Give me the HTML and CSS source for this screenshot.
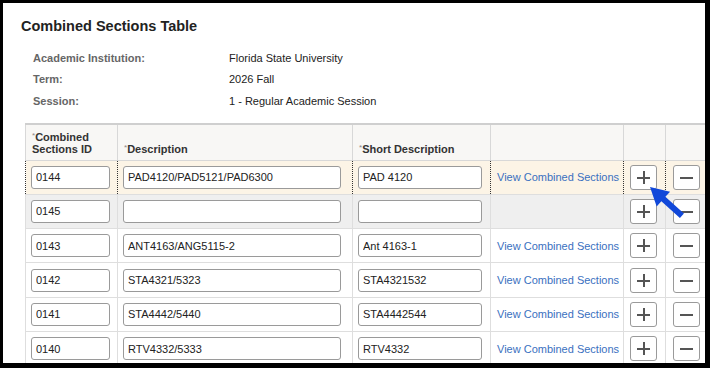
FILE: index.html
```html
<!DOCTYPE html>
<html>
<head>
<meta charset="utf-8">
<link rel="stylesheet" href="styles.css">
</head>
<body>
<div class="page">
  <h1 class="title">Combined Sections Table</h1>
  <div class="info">
    <div class="lbl">Academic Institution:</div><div class="val">Florida State University</div>
    <div class="lbl">Term:</div><div class="val">2026 Fall</div>
    <div class="lbl">Session:</div><div class="val">1 - Regular Academic Session</div>
  </div>
  <table class="grid">
    <colgroup>
      <col class="c-id"><col class="c-desc"><col class="c-short"><col class="c-link"><col class="c-btn"><col class="c-btn2">
    </colgroup>
    <thead>
      <tr>
        <th><span class="req">*</span>Combined<br>Sections ID</th>
        <th><span class="req">*</span>Description</th>
        <th><span class="req">*</span>Short Description</th>
        <th></th><th></th><th></th>
      </tr>
    </thead>
    <tbody>
      <tr class="sel">
        <td><input class="in-id" value="0144"></td>
        <td><input class="in-desc" value="PAD4120/PAD5121/PAD6300"></td>
        <td><input class="in-short" value="PAD 4120"></td>
        <td><a class="link">View Combined Sections</a></td>
        <td><span class="btn plus"></span></td>
        <td><span class="btn minus"></span></td>
      </tr>
      <tr class="new">
        <td><input class="in-id" value="0145"></td>
        <td><input class="in-desc" value=""></td>
        <td><input class="in-short" value=""></td>
        <td></td>
        <td><span class="btn plus"></span></td>
        <td><span class="btn minus"></span></td>
      </tr>
      <tr>
        <td><input class="in-id" value="0143"></td>
        <td><input class="in-desc" value="ANT4163/ANG5115-2"></td>
        <td><input class="in-short" value="Ant 4163-1"></td>
        <td><a class="link">View Combined Sections</a></td>
        <td><span class="btn plus"></span></td>
        <td><span class="btn minus"></span></td>
      </tr>
      <tr>
        <td><input class="in-id" value="0142"></td>
        <td><input class="in-desc" value="STA4321/5323"></td>
        <td><input class="in-short" value="STA4321532"></td>
        <td><a class="link">View Combined Sections</a></td>
        <td><span class="btn plus"></span></td>
        <td><span class="btn minus"></span></td>
      </tr>
      <tr>
        <td><input class="in-id" value="0141"></td>
        <td><input class="in-desc" value="STA4442/5440"></td>
        <td><input class="in-short" value="STA4442544"></td>
        <td><a class="link">View Combined Sections</a></td>
        <td><span class="btn plus"></span></td>
        <td><span class="btn minus"></span></td>
      </tr>
      <tr>
        <td><input class="in-id" value="0140"></td>
        <td><input class="in-desc" value="RTV4332/5333"></td>
        <td><input class="in-short" value="RTV4332"></td>
        <td><a class="link">View Combined Sections</a></td>
        <td><span class="btn plus"></span></td>
        <td><span class="btn minus"></span></td>
      </tr>
    </tbody>
  </table>
  <svg class="arrow" width="50" height="45" viewBox="0 0 50 45">
    <polygon points="7,7 27.06,11.64 22.37,16.83 40.9,33.6 36.9,38 18.35,21.29 13.66,26.48" fill="#1148d9"/>
  </svg>
</div>
</body>
</html>
```

FILE: styles.css
```css
html, body {
  margin: 0;
  padding: 0;
  background: #000;
}
body {
  width: 710px;
  height: 368px;
  overflow: hidden;
  font-family: "Liberation Sans", Arial, sans-serif;
}
.page {
  position: relative;
  margin: 3px 0 0 3px;
  width: 702px;
  height: 360px;
  background: #fff;
  overflow: hidden;
}
.title {
  margin: 0;
  padding: 14px 0 0 18px;
  font-size: 14.5px;
  line-height: 18px;
  font-weight: bold;
  color: #222;
}
.info {
  display: grid;
  grid-template-columns: 196px auto;
  grid-auto-rows: 21.5px;
  margin: 12px 0 0 30px;
  font-size: 11px;
  align-items: center;
}
.lbl {
  font-weight: bold;
  color: #666;
}
.val {
  color: #222;
}
.grid {
  margin: 11px 0 0 22px;
  border-collapse: collapse;
  table-layout: fixed;
  width: 722px;
  font-size: 11px;
}
.c-id { width: 92px; }
.c-desc { width: 235px; }
.c-short { width: 138px; }
.c-link { width: 133px; }
.c-btn { width: 42px; }
.c-btn2 { width: 82px; }
.grid th {
  background: #f8f7f5;
  border: 1px solid #d8d8d8;
  border-top: 2px solid #cfcfcf;
  text-align: left;
  vertical-align: bottom;
  font-weight: bold;
  color: #333;
  padding: 0 5px 5px 6px;
  height: 30px;
  line-height: 12px;
}
.req {
  color: #888;
  font-weight: normal;
  font-size: 8px;
  vertical-align: 3px;
}
.grid td {
  border: 1px solid #dedede;
  height: 33.3px;
  padding: 0 0 0 5px;
  vertical-align: middle;
  white-space: nowrap;
}
.grid tr.sel td {
  background: #fcf4e6;
  border: 1px dotted #333;
}
.grid tr.new td {
  background: #efefef;
}
input {
  box-sizing: border-box;
  height: 23px;
  border: 1px solid #9a9a9a;
  border-radius: 3px;
  padding: 0 4px;
  font-family: "Liberation Sans", Arial, sans-serif;
  font-size: 11px;
  color: #222;
  background: #fff;
  display: block;
}
.in-id { width: 79px; }
.in-desc { width: 218px; }
.in-short { width: 124px; }
.link {
  color: #3a70c0;
  margin-left: 1px;
}
.btn {
  display: block;
  position: relative;
  box-sizing: border-box;
  width: 27px;
  height: 25px;
  border: 1px solid #9a9a9a;
  border-radius: 3px;
  background: #fff;
  margin-left: 1px;
}
.minus {
  margin-left: 2px;
}
.btn::before {
  content: "";
  position: absolute;
  left: 6px;
  top: 11px;
  width: 13px;
  height: 2px;
  background: #555;
}
.plus::after {
  content: "";
  position: absolute;
  left: 12px;
  top: 5px;
  width: 2px;
  height: 13px;
  background: #555;
}
.arrow {
  position: absolute;
  left: 640px;
  top: 177px;
}
```
